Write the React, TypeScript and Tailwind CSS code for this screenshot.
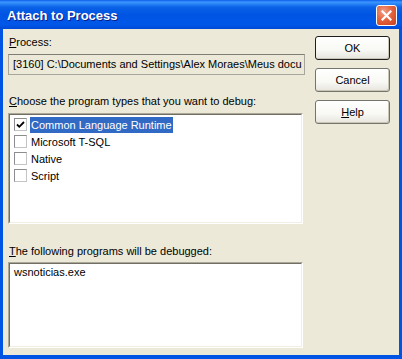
function Sunken({ className, children }: { className?: string; children?: React.ReactNode }) {
  return (
    <div className={`border border-[#aca899] border-b-white border-r-white ${className ?? ""}`}>
      <div className="h-full border border-[#716f64] border-b-[#f1efe2] border-r-[#f1efe2] bg-white">
        {children}
      </div>
    </div>
  );
}

function CheckRow({ label, checked, selected }: { label: string; checked?: boolean; selected?: boolean }) {
  return (
    <div className="h-[17px] flex items-center pl-[4px]">
      <div className="w-[13px] h-[13px] border border-[#8d8d8d] border-b-[#c4c4c4] border-r-[#c4c4c4] bg-white flex items-center justify-center">
        {checked && (
          <svg width="9" height="9" viewBox="0 0 9 9">
            <path d="M1 4.5 L3.3 6.8 L8 2" fill="none" stroke="#000" strokeWidth="1.8" />
          </svg>
        )}
      </div>
      <span
        className={`ml-[3px] h-[16px] px-[1px] leading-[16px] ${
          selected ? "bg-[#316ac5] text-white" : ""
        }`}
      >
        {label}
      </span>
    </div>
  );
}

function XpButton({ children, primary }: { children: React.ReactNode; primary?: boolean }) {
  return (
    <button
      className={`h-[24px] w-[75px] rounded-[3px] border bg-[linear-gradient(to_bottom,#ffffff_0%,#f8f8f4_60%,#e6e4dc_100%)] shadow-[inset_-1px_-1px_0_#c9c6b8] ${
        primary ? "border-[#1f1f1f]" : "border-[#74746c]"
      }`}
    >
      {children}
    </button>
  );
}

export default function App() {
  return (
    <div className="w-[402px] h-[359px] flex flex-col bg-[#0054e3] font-['Liberation_Sans',Arial,sans-serif] text-[11px] leading-[13px] text-black select-none overflow-hidden">
      {/* title bar */}
      <div className="h-[29px] shrink-0 flex items-center pl-[7px] pr-[5px] pt-[2px] bg-[linear-gradient(to_bottom,#0a5de8_0%,#3d95ff_7%,#2b86f7_13%,#0a62e6_25%,#0054e3_50%,#0057e8_85%,#0049d6_100%)]">
        <span className="flex-1 text-white font-bold text-[13px] [text-shadow:1px_1px_0_#0a1e8a]">
          Attach to Process
        </span>
        <div className="w-[21px] h-[21px] mt-[-1px] rounded-[3px] border border-white bg-[radial-gradient(circle_at_35%_30%,#f0a08a_0%,#e5643f_45%,#c7401c_100%)] flex items-center justify-center">
          <svg width="11" height="11" viewBox="0 0 11 11">
            <path d="M1.5 1.5 L9.5 9.5 M9.5 1.5 L1.5 9.5" stroke="#fff" strokeWidth="2.2" strokeLinecap="square" />
          </svg>
        </div>
      </div>

      {/* body */}
      <div className="flex-1 flex border-l-[3px] border-r-[3px] border-b-[4px] border-[#0054e3] bg-[#ece9d8] pl-[5px] pr-[9px] pt-[7px] gap-[10px]">
        <div className="w-[297px] flex flex-col">
          <div className="pl-[1px]">
            <span className="underline">P</span>rocess:
          </div>
          <div className="mt-[5px] h-[21px] border border-[#a7a69c] border-t-[#7f7e76] bg-[#ece9d8] pl-[4px] flex items-center whitespace-nowrap overflow-hidden">
            [3160] C:\Documents and Settings\Alex Moraes\Meus docu
          </div>

          <div className="mt-[20px] pl-[1px]">
            <span className="underline">C</span>hoose the program types that you want to debug:
          </div>
          <Sunken className="mt-[5px] h-[111px] w-[295px]">
            <div className="pt-[1px]">
              <CheckRow label="Common Language Runtime" checked selected />
              <CheckRow label="Microsoft T-SQL" />
              <CheckRow label="Native" />
              <CheckRow label="Script" />
            </div>
          </Sunken>

          <div className="mt-[21px] pl-[1px]">
            <span className="underline">T</span>he following programs will be debugged:
          </div>
          <Sunken className="mt-[4px] h-[86px] w-[295px]">
            <div className="pl-[4px] pt-[2px]">wsnoticias.exe</div>
          </Sunken>
        </div>

        <div className="w-[75px] flex flex-col gap-[8px]">
          <XpButton primary>OK</XpButton>
          <XpButton>Cancel</XpButton>
          <XpButton>
            <span className="underline">H</span>elp
          </XpButton>
        </div>
      </div>
    </div>
  );
}
